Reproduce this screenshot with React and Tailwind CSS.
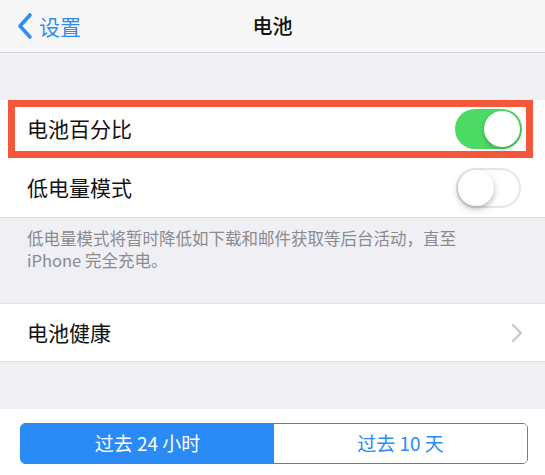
import React from 'react'

function Toggle({ on }) {
  return on ? (
    <div className="w-[67px] h-[40px] rounded-full bg-[#4cd964] flex items-center justify-end pr-[2px]">
      <div className="w-[36px] h-[36px] rounded-full bg-white shadow-[0_2px_4px_rgba(0,0,0,0.25)]" />
    </div>
  ) : (
    <div className="w-[65px] h-[40px] rounded-full bg-white border-2 border-[#e5e5ea] flex items-center pl-[0px]">
      <div className="w-[36px] h-[36px] rounded-full bg-white shadow-[0_3px_6px_rgba(0,0,0,0.28)]" />
    </div>
  )
}

export default function App() {
  return (
    <div className="w-[545px] h-[475px] overflow-hidden bg-[#efeff4] font-['Noto_Sans_CJK_SC',sans-serif] text-[#111]">
      <div className="h-[53px] bg-[#f7f7f8] border-b border-[#d6d6d9] flex items-center relative">
        <div className="flex items-center pl-[15px] text-[#2f8cf6]">
          <svg width="20" height="28" viewBox="0 0 20 28" fill="none">
            <path d="M15 3 L5 14 L15 25" stroke="#2f8cf6" strokeWidth="3.6" strokeLinecap="round" strokeLinejoin="round" />
          </svg>
          <span className="text-[21px] ml-[4px] leading-none">设置</span>
        </div>
        <div className="absolute left-0 right-0 text-center text-[20px] font-medium leading-none pointer-events-none">电池</div>
      </div>

      <div className="h-[47px]" />

      <div className="bg-white">
        <div className="ml-[8px] mr-[12px] h-[58px] border-[7px] border-[#f4573a] flex items-center justify-between pl-[12px] pr-[4px]">
          <span className="text-[21px]">电池百分比</span>
          <Toggle on />
        </div>
        <div className="h-[60px] flex items-center justify-between pl-[27px] pr-[24px] border-b border-[#dcdce0]">
          <span className="text-[21px]">低电量模式</span>
          <Toggle />
        </div>
      </div>

      <div className="h-[85px] px-[27px] pt-[9px] text-[16.5px] leading-[22px] text-[#8a8a8f]">
        低电量模式将暂时降低如下载和邮件获取等后台活动，直至
        <br />
        iPhone 完全充电。
      </div>

      <div className="h-[59px] bg-white flex items-center justify-between pl-[27px] pr-[22px] border-t border-b border-[#e2e2e6]">
        <span className="text-[21px]">电池健康</span>
        <svg width="12" height="20" viewBox="0 0 12 20" fill="none">
          <path d="M2 2 L10 10 L2 18" stroke="#c7c7cc" strokeWidth="2.2" strokeLinecap="round" strokeLinejoin="round" />
        </svg>
      </div>

      <div className="h-[47px]" />

      <div className="bg-white h-[70px] pt-[14px] px-[20px] pr-[17px]">
        <div className="flex h-[41px] rounded-[5px] border border-[#2a8af6] overflow-hidden text-[19px]">
          <div className="flex-1 bg-[#2a8af6] text-white flex items-center justify-center">过去 24 小时</div>
          <div className="flex-1 bg-white text-[#2a8af6] flex items-center justify-center">过去 10 天</div>
        </div>
      </div>
    </div>
  )
}
